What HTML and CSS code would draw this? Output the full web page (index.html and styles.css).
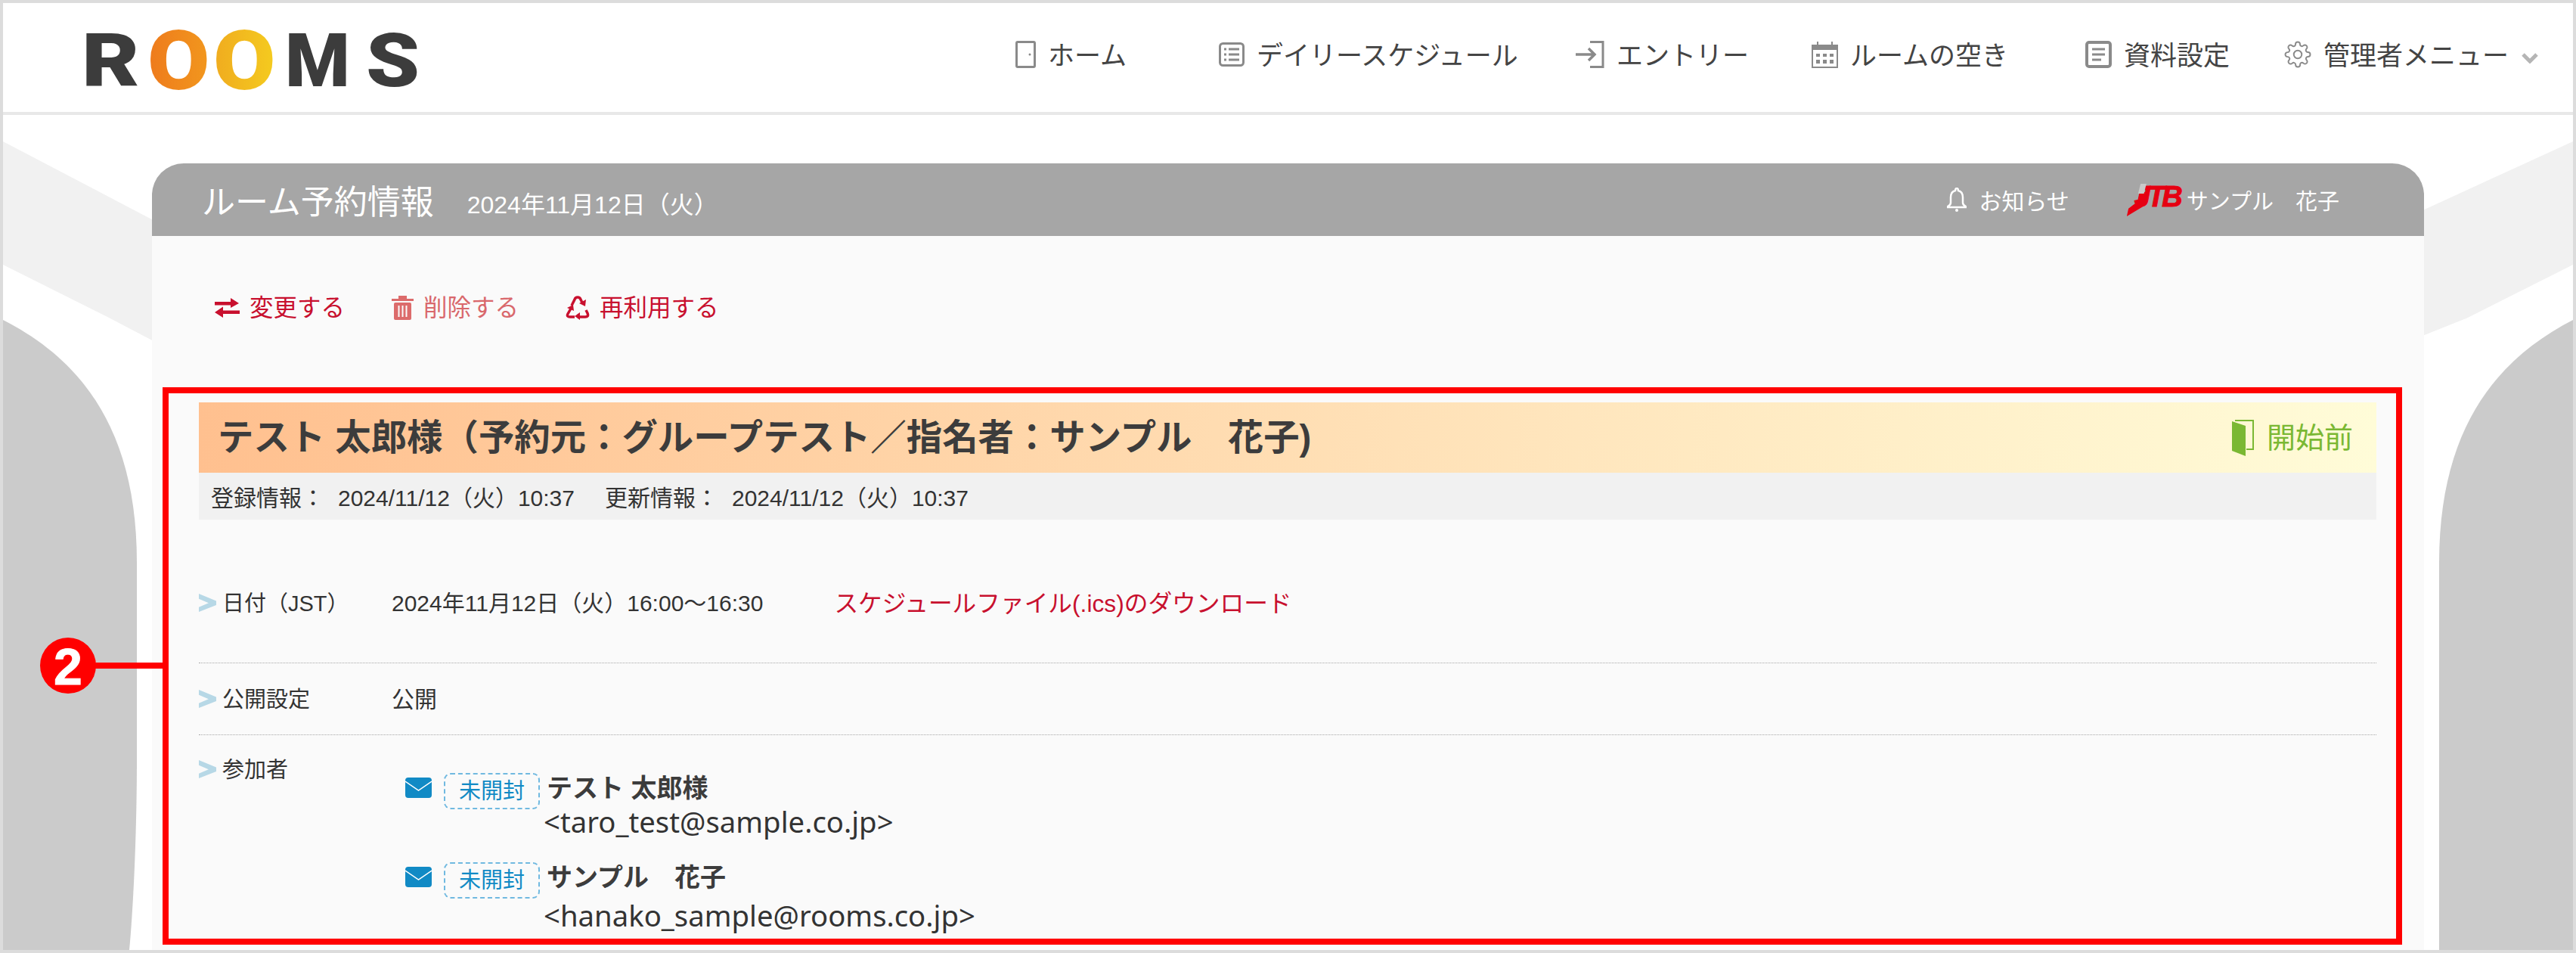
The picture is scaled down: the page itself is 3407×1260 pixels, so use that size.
FILE: index.html
```html
<!DOCTYPE html>
<html lang="ja">
<head>
  <meta charset="UTF-8" />
  <title>ルーム予約情報</title>
  <link rel="stylesheet" href="styles.css">
</head>

<body>
  <div class="page">
    <!-- Backdrop shapes -->
    <svg class="backdrop" viewBox="0 0 3399 1252" preserveAspectRatio="none" aria-hidden="true">
      <polygon points="0,183 300,340 300,500 140,416 0,346" fill="#f1f1f1" />
      <polygon points="3399,183 3100,320 3100,480 3260,416 3399,346" fill="#f1f1f1" />
      <path d="M0,419 C100,470 177,560 177,740 L177,1000 C177,1100 172,1200 167,1252 L0,1252 Z" fill="#cbcbcb" />
      <path d="M3399,419 C3300,470 3222,560 3222,740 L3222,1252 L3399,1252 Z" fill="#cbcbcb" />
    </svg>

    <!-- Header -->
    <header class="site-header">
      <div class="logo" aria-label="ROOMS">
        <span class="logo-r">R</span><span class="logo-o logo-o1">O</span><span class="logo-o logo-o2">O</span><span class="logo-m">M</span><span class="logo-s">S</span>
      </div>
      <nav class="nav">
        <a class="nav-item">
          <svg class="ico" width="27" height="36" viewBox="0 0 27 36"><rect x="1.5" y="1.5" width="24" height="33" rx="1.5" fill="none" stroke="#8a8a8a" stroke-width="3" /><circle cx="19" cy="18" r="1.5" fill="#8a8a8a" /></svg>
          ホーム
        </a>
        <a class="nav-item">
          <svg class="ico" width="34" height="32" viewBox="0 0 34 32"><rect x="1.5" y="1.5" width="31" height="29" rx="4" fill="none" stroke="#8a8a8a" stroke-width="3" /><path d="M7 9h3M13 9h14M7 16h3M13 16h14M7 23h3M13 23h14" stroke="#8a8a8a" stroke-width="3" /></svg>
          デイリースケジュール
        </a>
        <a class="nav-item">
          <svg class="ico" width="38" height="36" viewBox="0 0 38 36"><path d="M19 1.500h17v33h-17" fill="none" stroke="#8a8a8a" stroke-width="3" /><path d="M0 18h25M17 10l8 8-8 8" fill="none" stroke="#8a8a8a" stroke-width="3.500" /></svg>
          エントリー
        </a>
        <a class="nav-item">
          <svg class="ico" width="35" height="36" viewBox="0 0 35 36"><rect x="1" y="6" width="33" height="29" fill="none" stroke="#8a8a8a" stroke-width="2" /><rect x="1" y="6" width="33" height="6" fill="#8a8a8a" /><path d="M8 1v8M27 1v8" stroke="#8a8a8a" stroke-width="2" /><path d="M6 17h5v4h-5zM15 17h5v4h-5zM24 17h5v4h-5zM6 25h5v5h-5zM15 25h5v5h-5zM24 25h5v5h-5z" fill="#8a8a8a" /></svg>
          ルームの空き
        </a>
        <a class="nav-item">
          <svg class="ico" width="35" height="36" viewBox="0 0 35 36"><rect x="2" y="2" width="31" height="32" rx="3" fill="none" stroke="#8a8a8a" stroke-width="4" /><path d="M9 11h17M9 18h17M9 25h12" stroke="#8a8a8a" stroke-width="3" /></svg>
          資料設定
        </a>
        <a class="nav-item">
          <svg class="ico" width="36" height="36" viewBox="0 0 24 24" fill="none" stroke="#8a8a8a" stroke-width="1.300"><circle cx="12" cy="12" r="3.500" /><path d="M19.4 15a1.65 1.65 0 0 0 .33 1.82l.06.06a2 2 0 0 1 0 2.83 2 2 0 0 1-2.83 0l-.06-.06a1.65 1.65 0 0 0-1.82-.33 1.65 1.65 0 0 0-1 1.51V21a2 2 0 0 1-2 2 2 2 0 0 1-2-2v-.09A1.65 1.65 0 0 0 9 19.4a1.65 1.65 0 0 0-1.82.33l-.06.06a2 2 0 0 1-2.83 0 2 2 0 0 1 0-2.83l.06-.06a1.65 1.65 0 0 0 .33-1.82 1.65 1.65 0 0 0-1.51-1H3a2 2 0 0 1-2-2 2 2 0 0 1 2-2h.09A1.65 1.65 0 0 0 4.6 9a1.65 1.65 0 0 0-.33-1.82l-.06-.06a2 2 0 0 1 0-2.83 2 2 0 0 1 2.83 0l.06.06a1.65 1.65 0 0 0 1.82.33H9a1.65 1.65 0 0 0 1-1.51V3a2 2 0 0 1 2-2 2 2 0 0 1 2 2v.09a1.65 1.65 0 0 0 1 1.51 1.65 1.65 0 0 0 1.82-.33l.06-.06a2 2 0 0 1 2.83 0 2 2 0 0 1 0 2.83l-.06.06a1.65 1.65 0 0 0-.33 1.82V9a1.65 1.65 0 0 0 1.51 1H21a2 2 0 0 1 2 2 2 2 0 0 1-2 2h-.09a1.65 1.65 0 0 0-1.51 1z" /></svg>
          管理者メニュー
          <svg class="nav-caret" width="24" height="14" viewBox="0 0 24 14"><path d="M3 2l9 9 9-9" fill="none" stroke="#b5b5b5" stroke-width="5" /></svg>
        </a>
      </nav>
    </header>

    <!-- Card -->
    <main class="card">
      <div class="card-head">
        <h1 class="card-title">ルーム予約情報</h1>
        <span class="card-date">2024年11月12日（火）</span>
        <a class="notice">
          <svg width="26" height="32" viewBox="0 0 26 32"><path d="M13 1c1.500 0 2 1 2 3 4 1 6 4 6 9v7c0 2 2 4 4 5v1H1v-1c2-1 4-3 4-5v-7c0-5 2-8 6-9 0-2 .5-3 2-3z" fill="none" stroke="#fff" stroke-width="2.500" /><circle cx="13" cy="30" r="2" fill="#fff" /></svg>
          お知らせ
        </a>
        <div class="user">
          <span class="jtb">JTB</span>
          <span>サンプル　花子</span>
        </div>
      </div>

      <div class="actions">
        <a class="action">
          <svg width="33" height="26" viewBox="0 0 33 26"><path d="M0 5h21V0l11 7-11 6V9.500H0zM33 16.500H11v-5L0 19l11 7v-5h22z" fill="#c8102e" /></svg>
          変更する
        </a>
        <a class="action action-delete">
          <svg width="29" height="32" viewBox="0 0 29 32"><path d="M0 4h29v3H0zM9 0h11v4H9z" fill="#dc6b6b" /><rect x="3" y="9" width="23" height="23" rx="2" fill="#dc6b6b" /><path d="M9.500 13v15M14.500 13v15M19.500 13v15" stroke="#fafafa" stroke-width="2" /></svg>
          削除する
        </a>
        <a class="action">
          <svg width="32" height="32" viewBox="0 0 32 32"><path d="M8 13l4-8q1-3 4-3t4 3l2 4M7 17l-4 7q-2 4 3 4h6M19 28h7q5 0 3-5l-2-4" fill="none" stroke="#c8102e" stroke-width="3.500" /><path d="M27 5l-1 9-8-4zM11 20L2 16l8-4zM19 22v10l-7-5z" fill="#c8102e" /></svg>
          再利用する
        </a>
      </div>

      <!-- Highlighted block -->
      <section class="frame">
        <div class="callout-line"></div>
        <div class="callout">2</div>

        <div class="banner">
          <h2 class="banner-title">テスト 太郎様（予約元：グループテスト／指名者：サンプル　花子)</h2>
          <div class="status">
            <svg width="30" height="48" viewBox="0 0 30 48"><path d="M0 2l18 6v40L0 41z" fill="#7ab833" /><path d="M4 1h24v38h-9" fill="none" stroke="#7ab833" stroke-width="2" /></svg>
            <span class="status-text">開始前</span>
          </div>
        </div>
        <div class="meta">
          <span>登録情報：</span><span class="meta-value">2024/11/12（火）10:37</span>
          <span>更新情報：</span><span class="meta-value">2024/11/12（火）10:37</span>
        </div>

        <div class="row row-date">
          <div class="row-label">日付（JST）</div>
          <div class="row-value">2024年11月12日（火）16:00～16:30</div>
          <a class="ics-link">スケジュールファイル(.ics)のダウンロード</a>
        </div>
        <div class="row row-public">
          <div class="row-label">公開設定</div>
          <div class="row-value">公開</div>
        </div>
        <div class="row row-guests">
          <div class="row-label">参加者</div>
          <div class="guests">
            <div class="guest">
              <svg class="mail" width="35" height="27" viewBox="0 0 35 27"><rect width="35" height="27" rx="4" fill="#118ac5" /><path d="M0 5l17.500 12L35 5" fill="none" stroke="#fff" stroke-width="1.500" /></svg>
              <span class="pill">未開封</span>
              <div class="guest-text">
                <div class="guest-name">テスト 太郎様</div>
                <div class="guest-mail">&lt;taro_test@sample.co.jp&gt;</div>
              </div>
            </div>
            <div class="guest">
              <svg class="mail" width="35" height="27" viewBox="0 0 35 27"><rect width="35" height="27" rx="4" fill="#118ac5" /><path d="M0 5l17.500 12L35 5" fill="none" stroke="#fff" stroke-width="1.500" /></svg>
              <span class="pill">未開封</span>
              <div class="guest-text">
                <div class="guest-name">サンプル　花子</div>
                <div class="guest-mail">&lt;hanako_sample@rooms.co.jp&gt;</div>
              </div>
            </div>
          </div>
        </div>
      </section>
    </main>
  </div>
</body>
</html>
```

FILE: styles.css
```css
* {
  box-sizing: border-box;
  margin: 0;
  padding: 0;
}

html,
body {
  height: 100%;
  overflow: hidden;
}

body {
  font-family: "Liberation Sans", "Noto Sans CJK JP", sans-serif;
  color: #333;
  background: #fff;
}

.page {
  position: relative;
  height: 1260px;
  border: 4px solid #dcdcdc;
  display: flex;
  flex-direction: column;
  overflow: hidden;
}

.backdrop {
  position: absolute;
  left: 0;
  top: 0;
  width: 100%;
  height: 100%;
}

/* Header */
.site-header {
  position: relative;
  flex: none;
  height: 148px;
  background: #fff;
  border-bottom: 4px solid #e8e8e8;
  display: flex;
  align-items: flex-start;
}

.logo {
  display: flex;
  margin: 32px 0 0 104px;
  font-family: Roboto, sans-serif;
  font-weight: 900;
  font-size: 98px;
  line-height: 90px;
  color: #3c3c3c;
}

.logo-r {
  width: 95px;
  transform: scaleX(1.2);
  transform-origin: left;
}

.logo-o {
  width: 87px;
  background-clip: text;
  -webkit-background-clip: text;
  color: transparent;
  transform: scale(1.22, 1.12);
  transform-origin: 36px center;
}

.logo-o1 {
  background-image: linear-gradient(90deg, #ee7a1c, #f3a01e);
}

.logo-o2 {
  background-image: linear-gradient(90deg, #f0ab1f, #f6d51f);
}

.logo-m {
  width: 107px;
}

.logo-s {
  transform: scaleX(1.16);
  transform-origin: left;
}

.nav {
  margin-left: auto;
  margin-top: 52px;
  display: grid;
  grid-template-columns: 269px 472px 312px 362px 263px 340px;
  margin-right: 42px;
  font-size: 35px;
  line-height: 36px;
  color: #444;
}

.nav-item {
  display: flex;
  align-items: center;
  gap: 16px;
  white-space: nowrap;
}

.ico {
  transform: translateY(-2px);
}

.nav-caret {
  margin-top: 6px;
}

/* Card */
.card {
  position: relative;
  flex: 1;
  width: 3005px;
  margin: 64px auto 0;
  background: #fafafa;
  border-radius: 42px 42px 0 0;
  display: flex;
  flex-direction: column;
}

.card-head {
  flex: none;
  height: 96px;
  background: #a6a6a6;
  border-radius: 42px 42px 0 0;
  color: #fff;
  display: flex;
  align-items: center;
  padding: 0 112px 0 66px;
}

.card-title {
  font-size: 44px;
  font-weight: 400;
}

.card-date {
  margin-left: 44px;
  margin-top: 8px;
  font-size: 32px;
}

.notice {
  margin-left: auto;
  display: flex;
  align-items: center;
  gap: 16px;
  font-size: 30px;
}

.user {
  margin-left: 76px;
  display: flex;
  align-items: center;
  gap: 9px;
  font-size: 29px;
}

/* J tail and highlight of the JTB mark */
.jtb {
  position: relative;
  display: block;
  flex: none;
  width: 70px;
  height: 44px;
  padding-left: 10px;
  font: italic 700 38px/36px "Liberation Sans", sans-serif;
  letter-spacing: -4px;
  color: #e60012;
  -webkit-text-stroke: 1px #e60012;
}

.jtb::before {
  content: "";
  position: absolute;
  left: 0;
  top: 12px;
  width: 28px;
  height: 32px;
  background: #e60012;
  clip-path: polygon(60% 0, 100% 0, 86% 55%, 0 100%, 8% 68%, 50% 40%);
}

.jtb::after {
  content: "";
  position: absolute;
  left: 15px;
  top: 1px;
  width: 11px;
  height: 13px;
  background: #c9c9c9;
  clip-path: polygon(30% 0, 100% 0, 70% 100%, 0 100%);
}

.actions {
  flex: none;
  height: 200px;
  display: flex;
  gap: 62px;
  align-items: flex-start;
  padding: 77px 0 0 83px;
  font-size: 31.500px;
  line-height: 36px;
  color: #c8102e;
}

.action {
  display: flex;
  align-items: center;
  gap: 13px;
}

.action-delete {
  color: #d9686c;
}

/* Highlighted frame */
.frame {
  position: relative;
  flex: none;
  margin-left: 14px;
  width: 2962px;
  height: 737px;
  border: 8px solid #f00;
  padding: 12px 26px 0 40px;
}

.callout {
  position: absolute;
  left: -170px;
  top: 323px;
  width: 74px;
  height: 74px;
  border-radius: 50%;
  background: #f00;
  color: #fff;
  font: 700 68px/76px "Liberation Sans", sans-serif;
  -webkit-text-stroke: 1px #fff;
  text-align: center;
}

.callout-line {
  position: absolute;
  left: -100px;
  top: 356px;
  width: 92px;
  height: 8px;
  background: #f00;
}

.banner {
  height: 93px;
  background: linear-gradient(90deg, #ffc08f, #fffcd8);
  display: flex;
  align-items: center;
  justify-content: space-between;
  padding: 0 31px 0 25px;
}

.banner-title {
  margin-bottom: 8px;
  font-size: 47.400px;
  font-weight: 700;
  color: #3c3c3c;
}

.status {
  display: flex;
  align-items: center;
  gap: 16px;
  font-size: 38px;
  color: #7ab833;
}

.status-text {
  margin-bottom: 6px;
}

.meta {
  height: 62px;
  background: #f1f1f1;
  padding-left: 16px;
  display: flex;
  align-items: center;
  font-size: 30px;
}

.meta-value {
  margin: 0 40px 0 18px;
}

.row {
  display: flex;
  border-bottom: 1px dotted #a8a8a8;
  font-size: 29px;
  line-height: 36px;
}

.row-label {
  width: 255px;
  padding-left: 31px;
  position: relative;
}

.row-label::before {
  content: "";
  position: absolute;
  left: 0;
  top: 5px;
  width: 23px;
  height: 24px;
  background: #b7d8e6;
  clip-path: polygon(0 0, 100% 40%, 100% 62%, 0 100%, 0 74%, 56% 51%, 0 28%);
}

.row-value {
  font-size: 30px;
}

.row-date {
  height: 190px;
  padding-top: 93px;
}

.ics-link {
  margin-left: 94px;
  font-size: 31.700px;
  color: #c8102e;
}

.row-public {
  height: 95px;
  padding-top: 30px;
}

.row-guests {
  border-bottom: none;
  padding-top: 28px;
}

.guests {
  padding: 22px 0 0 18px;
}

.guest {
  display: flex;
  align-items: flex-start;
  height: 118px;
}

.mail {
  flex: none;
  margin: 6px 16px 0 0;
}

.pill {
  flex: none;
  width: 127px;
  height: 48px;
  border: 2px dashed #70b9e0;
  border-radius: 9px;
  color: #118ac5;
  text-align: center;
  line-height: 44px;
  margin-right: 5px;
}

.guest-name {
  padding-left: 4px;
  font-size: 34px;
  font-weight: 700;
  line-height: 40px;
  color: #3c3c3c;
}

.guest-mail {
  font-family: "Noto Sans", sans-serif;
  font-size: 38.300px;
  line-height: 48px;
}

.guest + .guest .guest-mail {
  margin-top: 6px;
}
```
